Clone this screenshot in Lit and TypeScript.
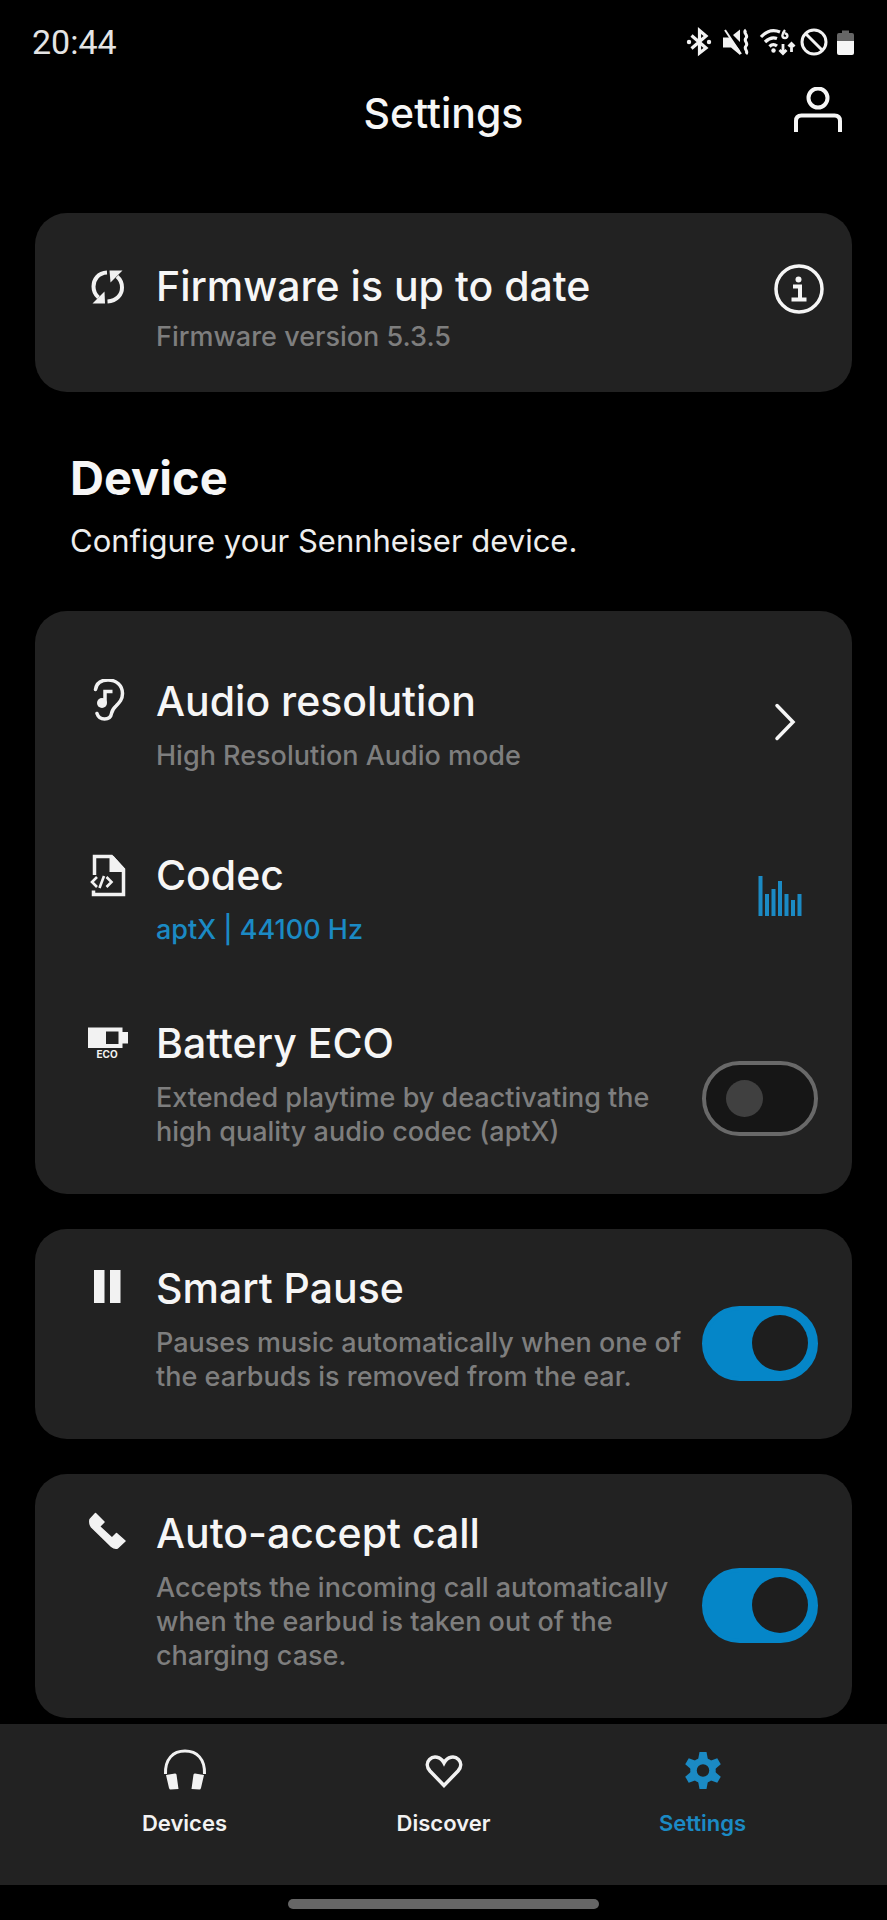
import { LitElement, html, svg, css, nothing, TemplateResult } from "lit";
import { customElement, property, state } from "lit/decorators.js";
import { classMap } from "lit/directives/class-map.js";

const ICONS: Record<string, TemplateResult> = {
  sync: html`<svg viewBox="0 0 44 44" width="44" height="44" fill="none" stroke="currentColor" stroke-width="4" aria-hidden="true">
    <path d="M21 8.500C12 9 7.500 15.500 7.500 22.500c0 4 1.500 8 5 11" />
    <path d="M21.500 37.500C31 37 36 30.500 36 23.500c0-4-1.500-8-5-11" />
    <path d="M23.500 6.500h13L24.500 18.500z" fill="currentColor" stroke="none" />
    <path d="M19 39.500H6.500L18.500 27.500z" fill="currentColor" stroke="none" />
  </svg>`,
  ear: html`<svg viewBox="0 0 44 44" width="44" height="44" fill="none" stroke="currentColor" stroke-width="3.500" stroke-linecap="round" aria-hidden="true">
    <path d="M9.500 10.500C10.500 4 15.500 1 22 1c8.500 0 14.500 5.500 14.500 13.500 0 6-3 9-6.500 12.500-3.500 3.300-4 4.500-4.500 7.500-.600 3.800-3 5.500-7 5.500-4 0-6.500-2.500-7.500-5.500" />
    <path d="M19 24V12.500h7.500" stroke-linecap="butt" />
    <circle cx="16" cy="24" r="5" fill="currentColor" stroke="none" />
  </svg>`,
  codec: html`<svg viewBox="0 0 44 44" width="44" height="44" fill="none" stroke="currentColor" stroke-width="3.500" aria-hidden="true">
    <path d="M8.500 22V3.500h17l12 13v25h-30V37.500" />
    <path d="M23.500 3h4L39 16v3H23.500z" fill="currentColor" stroke="none" />
    <path d="M11 24l-5 5 5 5M20.500 24l5 5-5 5M18 23l-4.500 12" stroke-width="2.600" />
  </svg>`,
  eco: html`<svg viewBox="0 0 44 44" width="44" height="44" fill="currentColor" aria-hidden="true">
    <path fill-rule="evenodd" d="M2 6.500h34.500v4.500H42v11.500h-5.500V27H2zM20 10.500v12.500H32.500v-12.500z" />
    <text class="eco-text" x="21" y="37" text-anchor="middle">ECO</text>
  </svg>`,
  pause: html`<svg viewBox="0 0 44 44" width="44" height="44" fill="currentColor" aria-hidden="true">
    <path d="M8 4h10.500v33H8zM24 4h10.500v33H24z" />
  </svg>`,
  call: html`<svg viewBox="0 0 44 44" width="44" height="44" fill="currentColor" stroke="currentColor" stroke-width="1.500" stroke-linejoin="round" aria-hidden="true">
    <path d="M9.500 2.500l8.500 8.500-4.500 4.500L26 27l4.500-4.500 8.500 7.500-7.500 7c-2 .500-4 0-6-1.500L5.500 16c-1.500-2-2-4.500-1.500-7.500z" />
  </svg>`,
};

const chevron = html`<svg viewBox="0 0 22 40" width="22" height="40" fill="none" stroke="currentColor" stroke-width="3.500" stroke-linecap="round" aria-hidden="true">
  <path d="M3 3.500L19 20 3 36.500" />
</svg>`;

const BAR_HEIGHTS = [40, 22, 27, 35, 22, 16, 22];
const bars = html`<svg viewBox="0 0 44 42" width="44" height="42" fill="currentColor" aria-hidden="true">
  ${BAR_HEIGHTS.map((h, i) => svg`<rect x=${0.5 + i * 6.5} y=${41 - h} width="4" height=${h} />`)}
</svg>`;

const info = html`<svg viewBox="0 0 50 50" width="50" height="50" fill="none" stroke="currentColor" stroke-width="3.500" aria-hidden="true">
  <circle cx="25" cy="25" r="23" />
  <path d="M19 22.500h7V35M17.500 35.500h15" stroke-width="4" />
  <circle cx="24.500" cy="15.500" r="3" fill="currentColor" stroke="none" />
</svg>`;

const NAV_ICONS: Record<string, TemplateResult> = {
  devices: html`<svg viewBox="0 0 44 42" width="44" height="42" aria-hidden="true">
    <path d="M2.500 26C2 11 10 3 22 3s20 8 19.500 23" fill="none" stroke="currentColor" stroke-width="3" />
    <path d="M3 27l9-1.500q1 0 1.500 1L15.500 41l-8 .500q-1 0-1.500-1.500zM41 27l-9-1.500q-1 0-1.500 1L28.500 41l8 .500q1 0 1.500-1.500z" fill="currentColor" />
  </svg>`,
  discover: html`<svg viewBox="0 0 44 42" width="44" height="42" fill="none" stroke="currentColor" stroke-width="3.500" aria-hidden="true">
    <path d="M22 37.500L8 23C4.500 19 4.500 14.500 7.500 11.500c4-4 11-3 14.500 3.500C25.500 8.500 32.500 7.500 36.500 11.500c3 3 3 7.500-.500 11.500z" />
  </svg>`,
  settings: html`<svg viewBox="0 0 44 42" width="44" height="42" aria-hidden="true">
    <circle cx="22" cy="22.500" r="9.500" fill="none" stroke="currentColor" stroke-width="6.500" />
    ${[0, 60, 120, 180, 240, 300].map(
      (a) => svg`<path d="M17 12l1.500-8h7l1.500 8z" fill="currentColor" transform="rotate(${a} 22 22.500)" />`
    )}
  </svg>`,
};

@customElement("toggle-switch")
export class ToggleSwitch extends LitElement {
  @property({ type: Boolean }) checked = false;
  @property() label = "";

  static styles = css`
    :host { display: block; }
    .switch {
      appearance: none;
      display: flex;
      align-items: center;
      box-sizing: border-box;
      width: 116px;
      height: 75px;
      margin: 0;
      padding: 0 20px;
      border: 4px solid #696969;
      border-radius: 38px;
      background: #161616;
      cursor: pointer;
    }
    .switch::before {
      content: "";
      width: 37px;
      height: 37px;
      border-radius: 50%;
      background: #404040;
    }
    .switch:checked {
      justify-content: flex-end;
      padding: 0 6px;
      border-color: #0586c8;
      background: #0586c8;
    }
    .switch:checked::before {
      width: 56px;
      height: 56px;
      background: #1e1e1e;
    }
  `;

  render() {
    return html`<input
      class="switch"
      type="checkbox"
      role="switch"
      aria-label=${this.label}
      .checked=${this.checked}
      @change=${(e: Event) => (this.checked = (e.target as HTMLInputElement).checked)}
    />`;
  }
}

@customElement("setting-row")
export class SettingRow extends LitElement {
  @property() icon = "";
  @property() heading = "";
  @property() detail = "";
  @property({ type: Boolean }) accent = false;
  @property({ type: Boolean }) compact = false;

  static styles = css`
    :host { display: block; }
    .row {
      display: grid;
      grid-template-columns: 44px minmax(0, 1fr) auto;
      column-gap: 26px;
    }
    .icon { display: flex; height: 48px; align-items: center; color: #f2f2f2; }
    .eco-text { font: 700 10px "Inter", sans-serif; }
    .heading {
      margin: 0;
      font-size: 41px;
      line-height: 48px;
      font-weight: 500;
      color: #f6f6f6;
    }
    .detail {
      margin: 14px 0 0;
      font-size: 27px;
      line-height: 34px;
      font-weight: 500;
      color: #7e7e7e;
    }
    .compact .detail { margin-top: 10px; }
    .accent .detail { color: #1b8ac4; }
    .trailing { align-self: center; margin-left: -20px; }
    .compact .trailing { align-self: start; padding-top: 2px; }
  `;

  render() {
    return html`<div class=${classMap({ row: true, accent: this.accent, compact: this.compact })}>
      <span class="icon">${ICONS[this.icon] ?? nothing}</span>
      <div>
        <h3 class="heading">${this.heading}</h3>
        <p class="detail">${this.detail}</p>
      </div>
      <div class="trailing"><slot></slot></div>
    </div>`;
  }
}

@customElement("app-root")
export class AppRoot extends LitElement {
  @state() private tab = "settings";

  static styles = css`
    :host {
      display: flex;
      flex-direction: column;
      min-height: 100vh;
      background: #000;
      color: #f6f6f6;
      font-family: "Inter", "Roboto", sans-serif;
    }
    .status {
      display: flex;
      justify-content: space-between;
      align-items: center;
      padding: 22px 31px 0 32px;
      height: 40px;
      font: 400 34px/40px "Roboto", sans-serif;
      color: #e4e4e4;
    }
    .top {
      display: grid;
      grid-template-columns: 52px 1fr 52px;
      align-items: center;
      padding: 23px 43px 0;
      height: 50px;
    }
    .top-title {
      grid-column: 2;
      margin: 0;
      padding-top: 4px;
      text-align: center;
      font-size: 41px;
      line-height: 48px;
      font-weight: 500;
    }
    .plain {
      display: flex;
      justify-content: center;
      align-items: center;
      padding: 0;
      border: 0;
      background: none;
      color: inherit;
      cursor: pointer;
    }
    main { flex: 1; padding: 78px 35px 0; }
    .card { border-radius: 32px; background: #222; }
    .firmware { padding: 49px 28px 38px 51px; }
    .intro { padding: 59px 35px 0; }
    .intro-title { margin: 0; font-size: 47px; line-height: 54px; font-weight: 700; }
    .intro-text { margin: 15px 0 0; font-size: 31px; line-height: 42px; color: #eee; }
    .device {
      display: flex;
      flex-direction: column;
      margin-top: 49px;
      padding: 66px 34px 45px 51px;
    }
    .codec { margin-top: 78px; }
    .battery { margin-top: 72px; }
    .single { margin-top: 35px; padding: 35px 34px 45px 51px; }
    .drop { margin-top: 28px; }
    .chevron, .bars { height: 48px; margin-bottom: 6px; }
    .chevron { width: 66px; }
    .bars { width: 76px; color: #1b8ac4; }
    .tabs {
      display: grid;
      grid-template-columns: repeat(3, 1fr);
      margin-top: 5px;
      padding: 24px 55px 48px;
      background: #222;
    }
    .tab {
      display: flex;
      flex-direction: column;
      align-items: center;
      gap: 19px;
      color: #f2f2f2;
      font-size: 22px;
      line-height: 28px;
      font-weight: 600;
      text-decoration: none;
    }
    .current { color: #1b8ac4; }
    .gesture { display: flex; justify-content: center; padding: 14px 0 11px; }
    .handle { width: 35%; height: 10px; border-radius: 5px; background: #666; }
  `;

  private renderStatus() {
    return html`<div class="status">
      <span>20:44</span>
      <svg viewBox="0 0 170 30" width="170" height="30" fill="none" stroke="#f2f2f2" stroke-width="2.800" aria-hidden="true">
        <path d="M5.500 8.500L20 21l-6.500 5V3.500L20 9 5.500 21.500" stroke-width="3.200" />
        <circle cx="3" cy="15" r="2.200" fill="#f2f2f2" stroke="none" />
        <circle cx="23" cy="15" r="2.200" fill="#f2f2f2" stroke="none" />
        <path d="M37 10.500h7l10 13v4.500l-9-7.500h-8zM54 2.500v12.500l-7-7z" fill="#f2f2f2" stroke="none" />
        <path d="M39 3l16 24" stroke-width="2" />
        <path d="M60 3c-4 3 3 5 0 8s3 5 0 8 3 5 0 8" stroke-width="3" />
        <path d="M75 10c6-6.500 13-7.500 19-5M79 15c4-4 8-5 12-3.500M83.500 19.500c2.500-2.500 5-2.500 7.500-.500" stroke-width="3.200" />
        <circle cx="87.500" cy="23.500" r="2.200" fill="#f2f2f2" stroke="none" />
        <path d="M99 3c-3.500 4-3.500 8 0 8s3-5-.500-4.500" stroke-width="2.400" />
        <path d="M97 17v9M93.500 23l3.500 3.500 3.500-3.500M105.500 25v-8M102.500 19.500l3-3 3 3" stroke-width="2.800" />
        <circle cx="128" cy="15" r="12" stroke-width="3" />
        <path d="M119.500 6.500l17 17" stroke-width="3" />
        <path d="M151 15V8q0-2 2-2h3V3.500h7V6h3q2 0 2 2v7z" fill="#666" stroke="none" />
        <path d="M151 14h17v12q0 2-2 2h-13q-2 0-2-2z" fill="#f6f6f6" stroke="none" />
      </svg>
    </div>`;
  }

  private renderTab(id: string, label: string) {
    return html`<a
      href="#${id}"
      class=${classMap({ tab: true, current: this.tab === id })}
      @click=${() => (this.tab = id)}
      >${NAV_ICONS[id]}<span>${label}</span></a
    >`;
  }

  render() {
    return html`
      ${this.renderStatus()}
      <header class="top">
        <h1 class="top-title">Settings</h1>
        <button class="plain" aria-label="Account">
          <svg viewBox="0 0 52 48" width="52" height="48" fill="none" stroke="currentColor" stroke-width="4" aria-hidden="true">
            <circle cx="26" cy="11" r="9.500" />
            <path d="M4 45V34q0-5.500 5.500-5.500h33Q48 28.500 48 34v11" />
          </svg>
        </button>
      </header>
      <main>
        <section class="card firmware">
          <setting-row compact icon="sync" heading="Firmware is up to date" detail="Firmware version 5.3.5">
            <button class="plain" aria-label="Firmware information">${info}</button>
          </setting-row>
        </section>
        <div class="intro">
          <h2 class="intro-title">Device</h2>
          <p class="intro-text">Configure your Sennheiser device.</p>
        </div>
        <section class="card device">
          <setting-row icon="ear" heading="Audio resolution" detail="High Resolution Audio mode">
            <button class="plain chevron" aria-label="Open audio resolution">${chevron}</button>
          </setting-row>
          <setting-row class="codec" accent icon="codec" heading="Codec" detail="aptX | 44100 Hz">
            <button class="plain bars" aria-label="Codec details">${bars}</button>
          </setting-row>
          <setting-row
            class="battery"
            icon="eco"
            heading="Battery ECO"
            detail="Extended playtime by deactivating the high quality audio codec (aptX)"
          >
            <toggle-switch class="drop" label="Battery ECO"></toggle-switch>
          </setting-row>
        </section>
        <section class="card single">
          <setting-row
            icon="pause"
            heading="Smart Pause"
            detail="Pauses music automatically when one of the earbuds is removed from the ear."
          >
            <toggle-switch class="drop" label="Smart Pause" checked></toggle-switch>
          </setting-row>
        </section>
        <section class="card single">
          <setting-row
            icon="call"
            heading="Auto-accept call"
            detail="Accepts the incoming call automatically when the earbud is taken out of the charging case."
          >
            <toggle-switch class="drop" label="Auto-accept call" checked></toggle-switch>
          </setting-row>
        </section>
      </main>
      <nav class="tabs" aria-label="Main">
        ${this.renderTab("devices", "Devices")} ${this.renderTab("discover", "Discover")}
        ${this.renderTab("settings", "Settings")}
      </nav>
      <div class="gesture"><div class="handle"></div></div>
    `;
  }
}
